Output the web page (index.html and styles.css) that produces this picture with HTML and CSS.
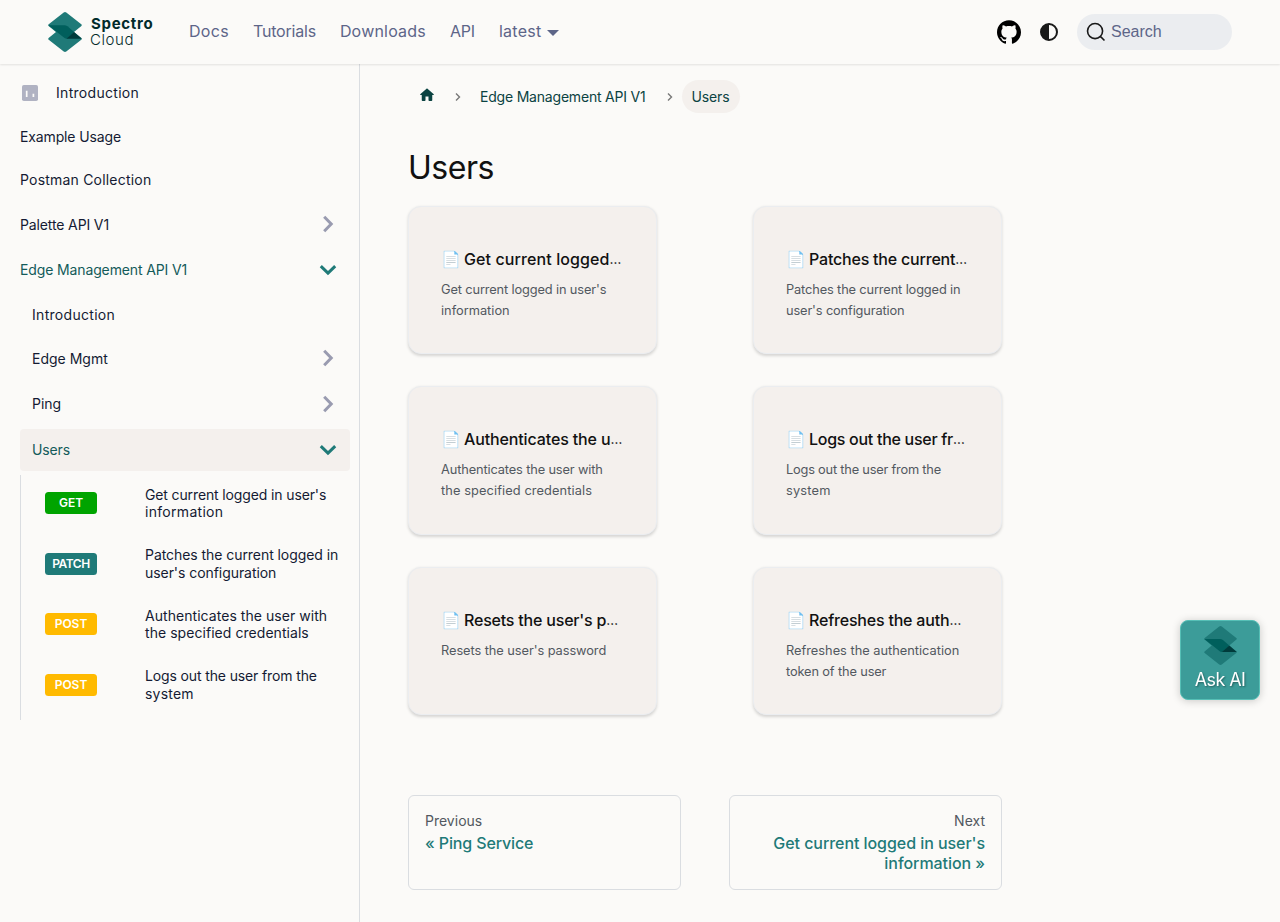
FILE: index.html
```html
<!DOCTYPE html>
<html lang="en">
<head>
<meta charset="utf-8">
<title>Users | Spectro Cloud</title>
<link rel="stylesheet" href="styles.css">
</head>
<body>
<svg class="defs" width="0" height="0" aria-hidden="true">
  <symbol id="mark" viewBox="0 0 34 40">
    <path fill="#1f7a78" d="M15.700.4Q17-.4 18.300.4L33.600 12.600Q34 13.200 33.400 13.900L26 20 33.400 26.100Q34 26.800 33.600 27.400L18.300 39.600Q17 40.400 15.700 39.600L.4 27.400Q0 26.800.6 26.100L8 20 .6 13.900Q0 13.200.4 12.600Z"/>
    <path fill="#005f5c" d="M.3 13.200H16.500Q18 13.200 19.500 14.300L26 20 19 26.700Q17.500 26.700 16.200 25.800Z"/>
    <path fill="#003b3b" d="M26 20 18.500 26.800H33.800Z"/>
  </symbol>
  <symbol id="chev" viewBox="0 0 24 24">
    <path d="M8.200 4.800 15.200 12 8.200 19.200" fill="none" stroke="currentColor" stroke-width="3"/>
  </symbol>
  <symbol id="small-chev" viewBox="0 0 8 10">
    <path d="M2 1.500 5.500 5 2 8.500" fill="none" stroke="#777" stroke-width="1.400"/>
  </symbol>
</svg>

<header class="navbar">
  <a class="brand">
    <svg class="brand-mark"><use href="#mark"/></svg>
    <span class="brand-text"><b>Spectro</b><span>Cloud</span></span>
  </a>
  <nav class="nav-links">
    <a class="ls-p3">Docs</a>
    <a class="ls-n2">Tutorials</a>
    <a class="ls-p2">Downloads</a>
    <a class="ls-n2">API</a>
    <a class="ls-p3 drop">latest</a>
  </nav>
  <div class="nav-tools">
    <svg class="github" viewBox="0 0 24 24"><path d="M12 .297c-6.630 0-12 5.373-12 12 0 5.303 3.438 9.800 8.205 11.385.6.113.82-.258.82-.577 0-.285-.01-1.040-.015-2.040-3.338.724-4.042-1.610-4.042-1.610C4.422 18.070 3.633 17.700 3.633 17.700c-1.087-.744.084-.729.084-.729 1.205.084 1.838 1.236 1.838 1.236 1.070 1.835 2.809 1.305 3.495.998.108-.776.417-1.305.76-1.605-2.665-.3-5.466-1.332-5.466-5.930 0-1.310.465-2.380 1.235-3.220-.135-.303-.54-1.523.105-3.176 0 0 1.005-.322 3.300 1.230.96-.267 1.980-.399 3-.405 1.020.006 2.040.138 3 .405 2.280-1.552 3.285-1.230 3.285-1.230.645 1.653.24 2.873.12 3.176.765.84 1.230 1.910 1.230 3.220 0 4.610-2.805 5.625-5.475 5.920.42.360.81 1.096.81 2.220 0 1.606-.015 2.896-.015 3.286 0 .315.21.69.825.570C20.565 22.092 24 17.592 24 12.297c0-6.627-5.373-12-12-12"/></svg>
    <svg class="theme" viewBox="0 0 18 18"><circle cx="9" cy="9" r="8" fill="none" stroke="#191919" stroke-width="2"/><path d="M9 1v16A8 8 0 0 1 9 1Z" fill="#191919"/></svg>
    <div class="search">
      <svg viewBox="0 0 20 20"><path d="M14.386 14.386l4.088 4.088-4.088-4.088c-2.942 2.942-7.711 2.942-10.653 0-2.942-2.942-2.942-7.711 0-10.653 2.942-2.942 7.711-2.942 10.653 0 2.942 2.942 2.942 7.711 0 10.653z" stroke="#191919" stroke-width="1.600" fill="none" stroke-linecap="round"/></svg>
      <span>Search</span>
    </div>
  </div>
</header>

<div class="page">
  <aside class="sidebar">
    <a class="row leaf with-icon">
      <svg class="doc-icon" viewBox="0 0 16 16"><rect width="16" height="16" rx="1.800" fill="#b0b2c2"/><path d="M4.700 5.700v6.300M11.400 8.700v3.300" stroke="#fbfaf8" stroke-width="1.700"/></svg>
      <span class="ls-p3">Introduction</span>
    </a>
    <a class="row leaf"><span class="ls-n1">Example Usage</span></a>
    <a class="row leaf"><span class="ls-p2">Postman Collection</span></a>
    <a class="row"><span class="ls-n1">Palette API V1</span><svg class="caret"><use href="#chev"/></svg></a>
    <a class="row open"><span class="ls-n1">Edge Management API V1</span><svg class="caret"><use href="#chev"/></svg></a>
    <div class="sub">
      <a class="row leaf"><span class="ls-p3">Introduction</span></a>
      <a class="row"><span>Edge Mgmt</span><svg class="caret"><use href="#chev"/></svg></a>
      <a class="row"><span>Ping</span><svg class="caret"><use href="#chev"/></svg></a>
    </div>
    <a class="row open active"><span class="ls-n1">Users</span><svg class="caret"><use href="#chev"/></svg></a>
    <div class="methods">
      <a class="method"><b class="badge get">GET</b><span><span class="ls-n1">Get current logged in user's</span><br><span class="ls-p3">information</span></span></a>
      <a class="method"><b class="badge patch">PATCH</b><span class="ls-n0">Patches the current logged in<br>user's configuration</span></a>
      <a class="method"><b class="badge post">POST</b><span class="ls-p0">Authenticates the user with<br>the specified credentials</span></a>
      <a class="method"><b class="badge post">POST</b><span><span class="ls-n1">Logs out the user from the</span><br><span class="ls-p2">system</span></span></a>
    </div>
  </aside>

  <main class="content">
    <nav class="crumbs">
      <svg class="home" viewBox="0 0 24 24"><path d="M10 19v-5h4v5c0 .55.45 1 1 1h3c.55 0 1-.45 1-1v-7h1.700c.46 0 .68-.57.33-.87L12.670 3.600c-.38-.34-.96-.34-1.340 0l-8.360 7.530c-.34.300-.13.870.330.870H5v7c0 .55.450 1 1 1h3c.55 0 1-.45 1-1z" fill="#0b4342"/></svg>
      <svg class="sep"><use href="#small-chev"/></svg>
      <span class="crumb ls-n2">Edge Management API V1</span>
      <svg class="sep sep-last"><use href="#small-chev"/></svg>
      <span class="crumb pill ls-n1">Users</span>
    </nav>
    <h1>Users</h1>
    <section class="cards">
      <a class="card"><h2><i>📄</i><span class="ls-p1">Get current logged</span><em>…</em></h2><p><span class="ls-n1">Get current logged in user's</span><br>information</p></a>
      <a class="card"><h2><i>📄</i><span class="ls-n2">Patches the current</span><em>…</em></h2><p class="ls-n1">Patches the current logged in<br>user's configuration</p></a>
      <a class="card"><h2><i>📄</i><span class="ls-n1">Authenticates the u</span><em>…</em></h2><p><span class="ls-n1">Authenticates the user with</span><br><span class="ls-p1">the specified credentials</span></p></a>
      <a class="card"><h2><i>📄</i><span class="ls-n3">Logs out the user fr</span><em>…</em></h2><p><span class="ls-n2">Logs out the user from the</span><br><span class="ls-p2">system</span></p></a>
      <a class="card"><h2><i>📄</i><span class="ls-n2">Resets the user's p</span><em>…</em></h2><p class="ls-n0">Resets the user's password</p></a>
      <a class="card"><h2><i>📄</i><span class="ls-n2">Refreshes the auth</span><em>…</em></h2><p>Refreshes the authentication<br><span class="ls-n1">token of the user</span></p></a>
    </section>
    <nav class="pager">
      <a><small>Previous</small><span class="ls-n1">« Ping Service</span></a>
      <a class="next"><small>Next</small><span class="ls-n0">Get current logged in user's<br>information »</span></a>
    </nav>
  </main>
</div>

<button class="ask"><svg><use href="#mark"/></svg><span>Ask AI</span></button>
</body>
</html>
```
FILE: styles.css
```css
* { box-sizing: border-box; }
body {
  margin: 0;
  height: 922px;
  overflow: hidden;
  background: #fbfaf8;
  color: #191919;
  font-family: Inter, "Liberation Sans", sans-serif;
  font-size: 16px;
}
.defs { position: absolute; }

.ls-n3 { letter-spacing: -.28px; }
.ls-n2 { letter-spacing: -.2px; }
.ls-n1 { letter-spacing: -.13px; }
.ls-n0 { letter-spacing: -.06px; }
.ls-p0 { letter-spacing: .05px; }
.ls-p1 { letter-spacing: .1px; }
.ls-p2 { letter-spacing: .2px; }
.ls-p3 { letter-spacing: .3px; }

.navbar {
  position: relative;
  z-index: 2;
  display: flex;
  align-items: center;
  height: 64px;
  padding: 0 48px;
  background: #fbfaf8;
  box-shadow: 0 1px 2px 0 rgba(0, 0, 0, .1);
}
.brand { display: flex; align-items: center; gap: 8px; width: 129px; }
.brand-mark { width: 34px; height: 40px; }
.brand-text { display: flex; flex-direction: column; margin-top: -1px; font-size: 15px; line-height: 16px; color: #032b2b; }
.brand-text b { padding-left: 1px; font-weight: 700; letter-spacing: .7px; }
.brand-text span { font-weight: 300; letter-spacing: .6px; }
.nav-links { display: flex; margin: -2px 0 0 12px; gap: 24px; color: #5d6588; line-height: 24px; }
.drop { display: flex; align-items: center; gap: 5px; }
.drop::after { content: ""; margin-top: 3px; border: 6.400px solid transparent; border-top-color: currentColor; border-bottom: 0; }
.nav-tools { display: flex; align-items: center; margin-left: auto; }
.github { width: 24px; height: 24px; }
.theme { width: 18px; height: 18px; margin: 0 19px; }
.search {
  display: flex;
  align-items: center;
  width: 155px;
  height: 36px;
  padding-left: 9px;
  gap: 5px;
  border-radius: 18px;
  background: #ebedf0;
  color: #5d6588;
  font-family: "Liberation Sans", Arial, sans-serif;
}
.search svg { width: 20px; height: 20px; overflow: visible; }

.page { display: flex; height: 858px; }
.sidebar {
  width: 360px;
  padding: 7px 9px 0 20px;
  border-right: 1px solid #dadde1;
  color: #141a33;
  font-size: 14px;
}
.row { display: flex; align-items: center; justify-content: space-between; height: 45.400px; padding-right: 10px; }
.leaf { height: 43.500px; }
.with-icon { justify-content: flex-start; gap: 18px; padding-left: 2px; }
.doc-icon { width: 16px; height: 16px; }
.caret { width: 24px; height: 24px; color: #999bb0; }
.open { color: #135b5a; }
.open .caret { transform: rotate(90deg); color: #1f7a78; }
.sub { padding-left: 12px; }
.active { height: 42px; margin-top: 2.400px; padding-left: 12px; border-radius: 4px; background: #f4f0ed; color: #135b5a; }
.methods { margin-top: 4px; height: 245px; padding-left: 24px; border-left: 1px solid #dadde1; }
.method { display: grid; grid-template-columns: 52px 1fr; column-gap: 48px; align-items: center; height: 60.500px; line-height: 17.500px; white-space: nowrap; }
.methods .method:first-child { height: 58.500px; padding-bottom: 2px; }
.badge { height: 22px; border-radius: 3.500px; color: #fff; font-size: 12px; font-weight: 600; line-height: 22px; text-align: center; }
.get { background: #00a400; }
.patch { background: #1f7a78; letter-spacing: -.5px; }
.post { background: #ffba00; }

.content { width: 642px; padding: 16px 0 0 48px; }
.crumbs { display: flex; align-items: center; height: 33px; padding-left: 10px; font-size: 14px; color: #0b4342; }
.home { width: 18px; height: 18px; margin-bottom: 4px; }
.sep { width: 8px; height: 10px; margin: 1px 18px 0; }
.sep-last { margin: 1px 8px 0 20px; }
.pill { height: 33px; padding: 0 10px; border-radius: 17px; background: #f4f0ed; line-height: 34px; }
h1 { margin: 35px 0 18px; font-size: 32px; font-weight: 400; line-height: 40px; letter-spacing: -.45px; color: #111; }
.cards { display: grid; grid-template-columns: 249px 249px; column-gap: 96px; row-gap: 32px; margin-top: 18px; }
.card {
  height: 148.400px;
  padding: 32px;
  border: 1px solid #ebedf0;
  border-radius: 13px;
  background: #f4f0ed;
  box-shadow: 0 1.500px 3px 0 rgba(0, 0, 0, .15);
  white-space: nowrap;
}
.card h2 { display: flex; margin: 0; font-size: 16px; font-weight: 500; line-height: 40px; color: #111; }
.card i { flex: none; width: 23px; font-style: normal; }
.card em { font-size: 13px; font-style: normal; }
.card p { margin: 0; font-size: 12.800px; line-height: 21px; color: #525860; }
.pager { display: grid; grid-template-columns: 273px 273px; column-gap: 48px; margin-top: 80px; }
.pager a {
  display: flex;
  flex-direction: column;
  gap: 3px;
  height: 95px;
  padding: 16px;
  border: 1px solid #dadde1;
  border-radius: 6px;
  color: #1f7a78;
  font-weight: 500;
  line-height: 20px;
}
.pager small { font-size: 14px; font-weight: 400; line-height: 17.500px; color: #525860; }
.pager .next { text-align: right; }

/* Floating assistant launcher */
.ask {
  position: fixed;
  right: 20px;
  bottom: 222px;
  display: flex;
  flex-direction: column;
  align-items: center;
  width: 80px;
  height: 80px;
  padding: 5px 0 0;
  border: 1px solid #56bfb6;
  border-radius: 8px;
  background: #3c9c99;
  box-shadow: 0 1px 8px rgba(0, 0, 0, .2);
  color: #fff;
  font: 400 18px/29px Inter, sans-serif;
  letter-spacing: -.6px;
  text-shadow: 1px 1px 2px rgba(0, 0, 0, .4);
}
.ask svg { width: 33px; height: 39px; }
```
